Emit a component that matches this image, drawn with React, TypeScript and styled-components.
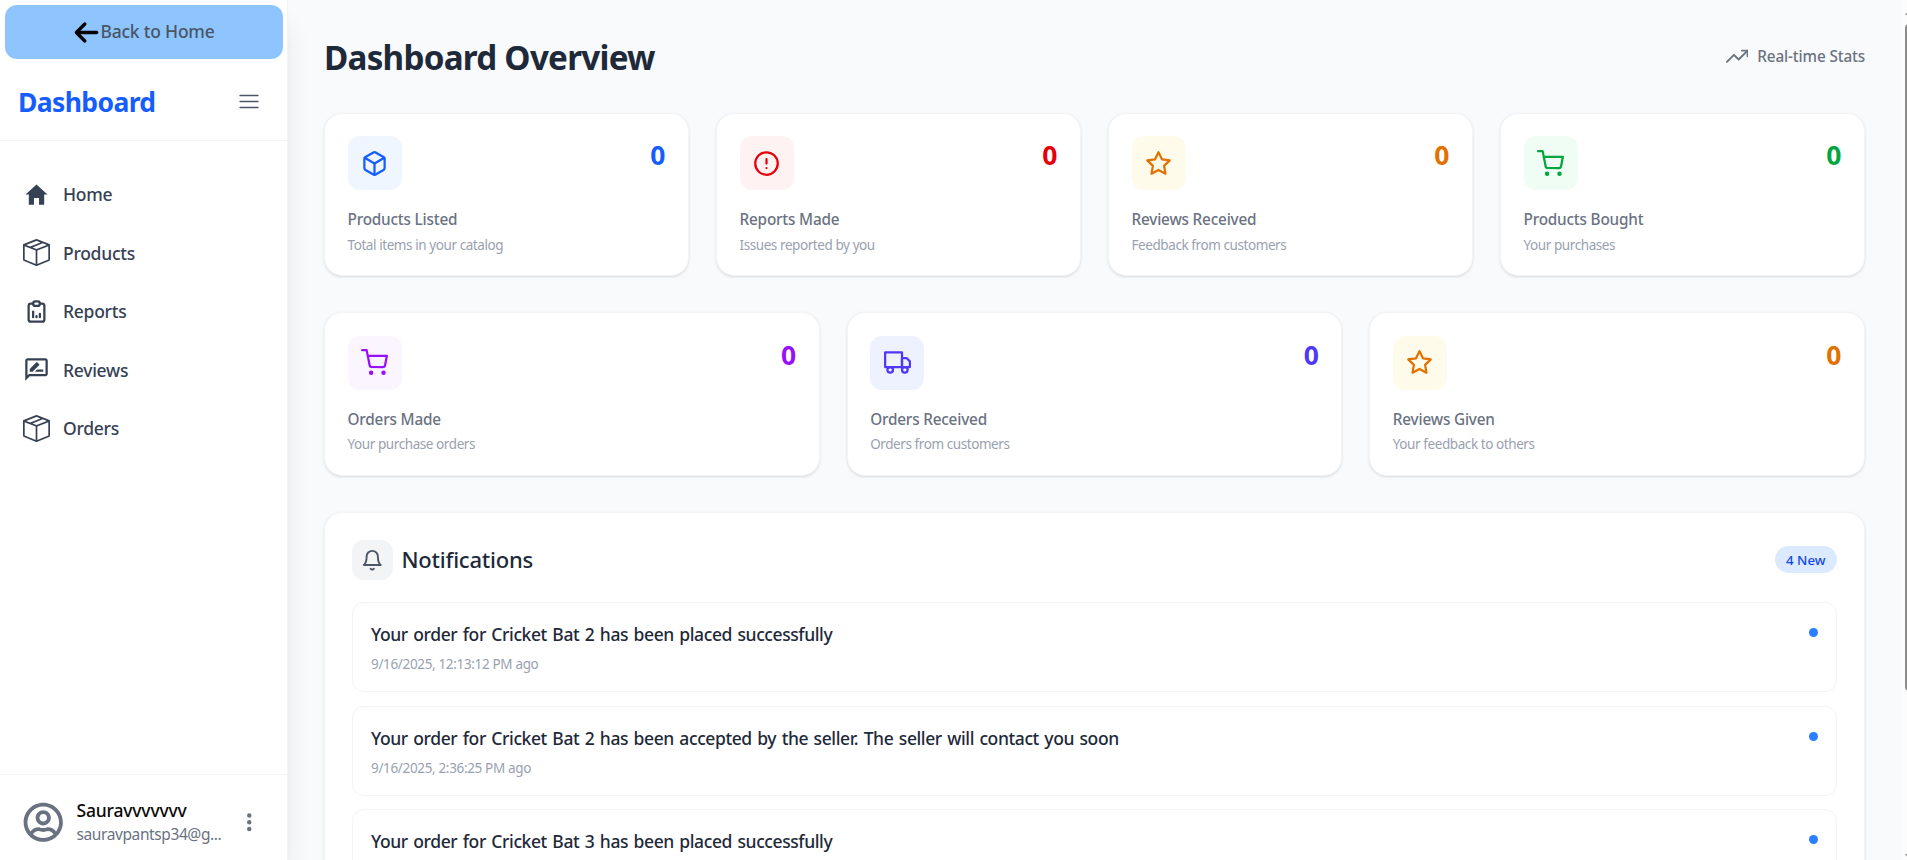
import React from 'react';
import styled, { createGlobalStyle } from 'styled-components';
import type { IconType } from 'react-icons';
import { FaArrowLeft } from 'react-icons/fa6';
import { FaRegUserCircle } from 'react-icons/fa';
import { IoMdHome } from 'react-icons/io';
import { BsBoxSeam } from 'react-icons/bs';
import { TbReportAnalytics } from 'react-icons/tb';
import { MdOutlineRateReview } from 'react-icons/md';
import { HiDotsVertical } from 'react-icons/hi';
import {
  FiAlertCircle,
  FiBell,
  FiBox,
  FiShoppingCart,
  FiStar,
  FiTrendingUp,
  FiTruck,
} from 'react-icons/fi';

const GlobalStyle = createGlobalStyle`
  *, *::before, *::after { box-sizing: border-box; }
  body {
    margin: 0;
    overflow: hidden;
    font-family: "Segoe UI", "Noto Sans", "Open Sans", sans-serif;
    background: #f9fafb;
  }
  h1, h2, h3, p { margin: 0; }
  svg { display: block; flex: none; }
`;

const Shell = styled.div`
  display: flex;
  height: 860px;
  overflow: hidden;
`;

/* Sidebar */

const Sidebar = styled.aside`
  flex: none;
  width: 288px;
  display: flex;
  flex-direction: column;
  background: #fff;
  border-right: 1px solid #f3f4f6;
  box-shadow: 0 22px 28px -5px rgba(0, 0, 0, 0.1), 0 9px 11px -7px rgba(0, 0, 0, 0.1);
  z-index: 1;
`;

const BackButton = styled.a`
  display: flex;
  align-items: center;
  justify-content: center;
  height: 54px;
  margin: 5px 4px 0 5px;
  border-radius: 12px;
  background: #8ec5ff;
  color: #4a5565;
  font-size: 17.5px;
  line-height: 27px;
  font-weight: 500;
  letter-spacing: -0.22px;
  svg { color: #000; }
  span { margin-top: -1px; }
`;

const SidebarHeader = styled.div`
  display: flex;
  align-items: center;
  justify-content: space-between;
  height: 82px;
  padding: 4px 28px 0 18px;
  border-bottom: 1px solid #f3f4f6;
  color: #4a5565;
`;

const Brand = styled.h2`
  font-size: 26.5px;
  line-height: 36px;
  font-weight: 700;
  letter-spacing: -0.62px;
  color: #155dfc;
`;

const Nav = styled.nav`
  flex: 1;
  display: flex;
  flex-direction: column;
  gap: 4.5px;
  padding: 26px 9px;
`;

const NavItem = styled.a`
  display: flex;
  align-items: center;
  gap: 13.5px;
  height: 54px;
  padding: 0 13.5px;
  color: #364153;
  font-size: 17.5px;
  font-weight: 500;
  letter-spacing: -0.27px;
`;

const Profile = styled.div`
  display: flex;
  align-items: center;
  height: 86px;
  padding: 9px 27px 0 23px;
  border-top: 1px solid #f3f4f6;
  color: #6a7282;
`;

const ProfileText = styled.div`
  width: 149px;
  margin: -1px 13px 0 13px;
`;

const ProfileName = styled.p`
  font-size: 17.5px;
  line-height: 25px;
  font-weight: 500;
  letter-spacing: -0.18px;
  color: #0a0a0a;
`;

const ProfileEmail = styled.p`
  font-size: 15.5px;
  line-height: 23px;
  letter-spacing: -0.4px;
  white-space: nowrap;
`;

/* Main area */

const Main = styled.main`
  flex: 1;
  min-width: 0;
  display: flex;
  flex-direction: column;
  gap: 36px;
  padding: 36px 36px 0;
`;

const PageHeader = styled.header`
  display: flex;
  flex: none;
  align-items: center;
  justify-content: space-between;
  height: 40.5px;
`;

const PageTitle = styled.h1`
  padding-top: 4px;
  font-size: 33.2px;
  line-height: 40px;
  font-weight: 700;
  letter-spacing: -0.74px;
  color: #1e2939;
`;

const LiveLabel = styled.div`
  display: flex;
  align-items: center;
  gap: 9px;
  color: #6a7282;
  font-size: 15.3px;
  font-weight: 500;
  letter-spacing: -0.14px;
`;

const StatRow = styled.section<{ $columns: number }>`
  flex: none;
  display: grid;
  grid-template-columns: repeat(${p => p.$columns}, 1fr);
  gap: 27px;
`;

const Card = styled.article`
  height: 163.5px;
  padding: 22.5px;
  border: 1px solid #f3f4f6;
  border-radius: 18px;
  background: #fff;
  box-shadow: 0 1px 3px rgba(0, 0, 0, 0.1), 0 1px 2px -1px rgba(0, 0, 0, 0.1);
`;

const CardTop = styled.div`
  display: flex;
  justify-content: space-between;
  align-items: flex-start;
  margin-bottom: 18px;
`;

const IconTile = styled.div<{ $fg: string; $bg: string; $size: number }>`
  display: grid;
  place-items: center;
  width: ${p => p.$size}px;
  height: ${p => p.$size}px;
  border-radius: 12px;
  color: ${p => p.$fg};
  background: ${p => p.$bg};
`;

const Count = styled.span<{ $fg: string }>`
  padding-top: 1px;
  font-size: 26.5px;
  line-height: 36px;
  font-weight: 700;
  color: ${p => p.$fg};
`;

const CardTitle = styled.h3`
  font-size: 15.3px;
  line-height: 22.5px;
  font-weight: 500;
  letter-spacing: -0.18px;
  color: #6a7282;
`;

const CardNote = styled.p`
  margin-top: 5px;
  font-size: 13.5px;
  line-height: 18px;
  letter-spacing: -0.42px;
  color: #99a1af;
`;

/* Notifications */

const Panel = styled.section`
  flex: none;
  padding: 27px;
  border: 1px solid #f3f4f6;
  border-radius: 18px;
  background: #fff;
  box-shadow: 0 1px 3px rgba(0, 0, 0, 0.1), 0 1px 2px -1px rgba(0, 0, 0, 0.1);
`;

const PanelHeader = styled.div`
  display: flex;
  align-items: center;
  gap: 9px;
  margin-bottom: 22px;
`;

const PanelTitle = styled.h2`
  flex: 1;
  margin-top: -1px;
  font-size: 22px;
  line-height: 32px;
  font-weight: 500;
  letter-spacing: -0.22px;
  color: #1e2939;
`;

const Badge = styled.span`
  height: 27px;
  padding: 2px 11.5px 0;
  border-radius: 14px;
  background: #dbeafe;
  color: #1447e6;
  font-size: 13.3px;
  line-height: 25px;
  font-weight: 500;
`;

const List = styled.div`
  display: flex;
  flex-direction: column;
  gap: 13.5px;
`;

const Item = styled.div`
  display: flex;
  justify-content: space-between;
  height: 90px;
  padding: 18px;
  border: 1px solid #f3f4f6;
  border-radius: 12px;
`;

const ItemTitle = styled.p`
  font-size: 17.5px;
  line-height: 27px;
  font-weight: 500;
  letter-spacing: -0.4px;
  word-spacing: 1.3px;
  color: #1e2939;
`;

const ItemTime = styled.p`
  margin-top: 7px;
  font-size: 13.5px;
  line-height: 18px;
  letter-spacing: -0.34px;
  color: #99a1af;
`;

const UnreadDot = styled.span`
  width: 9px;
  height: 9px;
  margin-top: 7px;
  border-radius: 50%;
  background: #2b7fff;
`;

/* Scrollbar, cut off by the window's edge */

const Scrollbar = styled.div`
  flex: none;
  width: 6px;
  display: flex;
  flex-direction: column;
  justify-content: space-between;
  padding: 10px 0 1px 4px;
  background: #fcfcfc;
  overflow: hidden;
`;

const Thumb = styled.div`
  width: 8px;
  height: 667px;
  margin: 9px 0 auto;
  border-radius: 4px;
  background: #8b8b8b;
`;

const MenuIcon = () => (
  <svg width="20" height="16" viewBox="0 0 20 16" stroke="currentColor" strokeWidth="1.3" strokeLinecap="round">
    <path d="M1 1.5h18M1 7.5h18M1 13.5h18" />
  </svg>
);

const ScrollArrow = ({ down = false }: { down?: boolean }) => (
  <svg width="8" height="5" viewBox="0 0 8 5" fill="#8b8b8b">
    <path d={down ? 'M0 0h8L4 5z' : 'M0 5h8L4 0z'} />
  </svg>
);

const navItems: { label: string; icon: IconType }[] = [
  { label: 'Home', icon: IoMdHome },
  { label: 'Products', icon: BsBoxSeam },
  { label: 'Reports', icon: TbReportAnalytics },
  { label: 'Reviews', icon: MdOutlineRateReview },
  { label: 'Orders', icon: BsBoxSeam },
];

type Stat = { title: string; note: string; icon: IconType; fg: string; bg: string };

const topStats: Stat[] = [
  { title: 'Products Listed', note: 'Total items in your catalog', icon: FiBox, fg: '#155dfc', bg: '#eff6ff' },
  { title: 'Reports Made', note: 'Issues reported by you', icon: FiAlertCircle, fg: '#e7000b', bg: '#fef2f2' },
  { title: 'Reviews Received', note: 'Feedback from customers', icon: FiStar, fg: '#e17100', bg: '#fffbeb' },
  { title: 'Products Bought', note: 'Your purchases', icon: FiShoppingCart, fg: '#00a63e', bg: '#f0fdf4' },
];

const orderStats: Stat[] = [
  { title: 'Orders Made', note: 'Your purchase orders', icon: FiShoppingCart, fg: '#9810fa', bg: '#faf5ff' },
  { title: 'Orders Received', note: 'Orders from customers', icon: FiTruck, fg: '#4f39f6', bg: '#eef2ff' },
  { title: 'Reviews Given', note: 'Your feedback to others', icon: FiStar, fg: '#e17100', bg: '#fffbeb' },
];

const notifications = [
  { title: 'Your order for Cricket Bat 2 has been placed successfully', time: '9/16/2025, 12:13:12 PM ago' },
  {
    title: 'Your order for Cricket Bat 2 has been accepted by the seller. The seller will contact you soon',
    time: '9/16/2025, 2:36:25 PM ago',
  },
  { title: 'Your order for Cricket Bat 3 has been placed successfully', time: '' },
];

const StatCard = ({ title, note, icon: Icon, fg, bg }: Stat) => (
  <Card>
    <CardTop>
      <IconTile $fg={fg} $bg={bg} $size={54}>
        <Icon size={27} />
      </IconTile>
      <Count $fg={fg}>0</Count>
    </CardTop>
    <CardTitle>{title}</CardTitle>
    <CardNote>{note}</CardNote>
  </Card>
);

export default function App() {
  return (
    <>
      <GlobalStyle />
      <Shell>
        <Sidebar>
          <BackButton>
            <FaArrowLeft size={27} />
            <span>Back to Home</span>
          </BackButton>
          <SidebarHeader>
            <Brand>Dashboard</Brand>
            <MenuIcon />
          </SidebarHeader>
          <Nav>
            {navItems.map(({ label, icon: Icon }) => (
              <NavItem key={label}>
                <Icon size={27} />
                {label}
              </NavItem>
            ))}
          </Nav>
          <Profile>
            <FaRegUserCircle size={40.5} />
            <ProfileText>
              <ProfileName>Sauravvvvvvv</ProfileName>
              <ProfileEmail>sauravpantsp34@g...</ProfileEmail>
            </ProfileText>
            <HiDotsVertical size={22.5} />
          </Profile>
        </Sidebar>
        <Main>
          <PageHeader>
            <PageTitle>Dashboard Overview</PageTitle>
            <LiveLabel>
              <FiTrendingUp size={22.5} />
              Real-time Stats
            </LiveLabel>
          </PageHeader>
          <StatRow $columns={4}>
            {topStats.map(s => <StatCard key={s.title} {...s} />)}
          </StatRow>
          <StatRow $columns={3}>
            {orderStats.map(s => <StatCard key={s.title} {...s} />)}
          </StatRow>
          <Panel>
            <PanelHeader>
              <IconTile $fg="#4a5565" $bg="#f3f4f6" $size={40.5}>
                <FiBell size={22.5} />
              </IconTile>
              <PanelTitle>Notifications</PanelTitle>
              <Badge>4 New</Badge>
            </PanelHeader>
            <List>
              {notifications.map((n, i) => (
                <Item key={i}>
                  <div>
                    <ItemTitle>{n.title}</ItemTitle>
                    <ItemTime>{n.time}</ItemTime>
                  </div>
                  <UnreadDot />
                </Item>
              ))}
            </List>
          </Panel>
        </Main>
        <Scrollbar>
          <ScrollArrow />
          <Thumb />
          <ScrollArrow down />
        </Scrollbar>
      </Shell>
    </>
  );
}
